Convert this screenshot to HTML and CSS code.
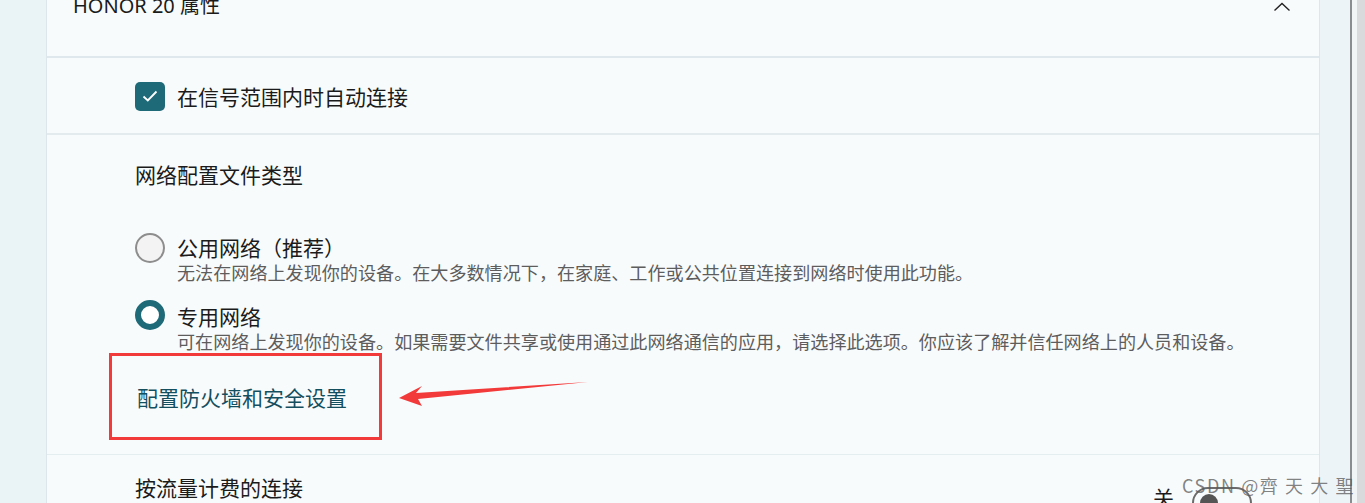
FILE: index.html
```html
<!DOCTYPE html>
<html lang="zh-CN">
<head>
  <meta charset="UTF-8">
  <title>HONOR 20 属性</title>
  <link rel="stylesheet" href="styles.css">
</head>
<body>
  <div class="window">
    <div class="side-left"></div>

    <main class="panel">
      <div class="header">
        <span class="title">HONOR 20 属性</span>
        <svg class="chevron" width="18" height="10" viewBox="0 0 18 10">
          <polyline points="1.5,8.5 9,1.5 16.5,8.5" fill="none" stroke="#222" stroke-width="1.4"/>
        </svg>
      </div>

      <div class="row check-row">
        <span class="checkbox">
          <svg width="16" height="12" viewBox="0 0 16 12">
            <polyline points="1.5,6.5 5.8,10.5 14.5,1.5" fill="none" stroke="#fff" stroke-width="1.8"/>
          </svg>
        </span>
        <span class="label">在信号范围内时自动连接</span>
      </div>

      <section class="row profile">
        <div class="section-title">网络配置文件类型</div>

        <div class="option">
          <span class="radio"></span>
          <div>
            <div class="label">公用网络（推荐）</div>
            <div class="desc">无法在网络上发现你的设备。在大多数情况下，在家庭、工作或公共位置连接到网络时使用此功能。</div>
          </div>
        </div>

        <div class="option second">
          <span class="radio on"></span>
          <div>
            <div class="label">专用网络</div>
            <div class="desc">可在网络上发现你的设备。如果需要文件共享或使用通过此网络通信的应用，请选择此选项。你应该了解并信任网络上的人员和设备。</div>
          </div>
        </div>

        <div class="mark-box">
          <a class="link" href="#">配置防火墙和安全设置</a>
        </div>
      </section>

      <div class="row metered">
        <span class="label">按流量计费的连接</span>
        <div class="switch-wrap">
          <span class="off">关</span>
          <span class="switch"><span class="knob"></span></span>
        </div>
      </div>
    </main>

    <div class="side-right">
      <div class="track"></div>
      <div class="edge"></div>
    </div>
  </div>

  <svg class="arrow" width="200" height="30" viewBox="0 0 200 30">
    <polygon points="190,1 18,12 24,5 1,17 24,25 20,18" fill="#f23a3a"/>
  </svg>

  <div class="watermark">CSDN @齊 天 大 聖</div>
</body>
</html>
```

FILE: styles.css
```css
body {
  margin: 0;
  height: 503px;
  overflow: hidden;
  font-family: "Noto Sans CJK SC", "Noto Sans", sans-serif;
  color: #1b1b1b;
  background: #eaf3f6;
}
.window {
  display: flex;
  height: 503px;
}
.side-left {
  width: 46px;
  background: #eaf3f6;
  border-right: 1px solid #dde7eb;
}
.panel {
  width: 1272px;
  background: #f8fbfc;
  display: flex;
  flex-direction: column;
  overflow: hidden;
}
.panel > * {
  flex-shrink: 0;
}
.header {
  height: 56px;
  border-bottom: 2px solid #dfe8ec;
  display: flex;
  justify-content: space-between;
  align-items: flex-start;
  padding: 0 28px 0 26px;
}
.title {
  font-family: "Noto Sans", "Noto Sans CJK SC", sans-serif;
  font-size: 20px;
  line-height: 28px;
  margin-top: -8px;
}
.chevron {
  margin-top: 2px;
}
.row {
  padding-left: 88px;
}
.check-row {
  height: 75px;
  border-bottom: 2px solid #e3ebef;
  display: flex;
  align-items: center;
  gap: 12px;
}
.checkbox {
  width: 30px;
  height: 29px;
  border-radius: 5px;
  background: #1f6a78;
  display: flex;
  align-items: center;
  justify-content: center;
  margin-top: 1px;
}
.label {
  font-size: 21px;
  line-height: 28px;
}
.profile {
  height: 320px;
  box-sizing: border-box;
  padding-top: 25px;
  border-bottom: 1px solid #e4eef1;
}
.section-title {
  font-size: 21px;
  line-height: 28px;
  margin-bottom: 45px;
}
.option {
  display: flex;
  gap: 12px;
}
.option.second {
  margin-top: 19px;
}
.radio {
  width: 26px;
  height: 26px;
  border: 2px solid #8d8d8d;
  border-radius: 50%;
  background: #f3f3f3;
  flex-shrink: 0;
}
.radio.on {
  width: 18px;
  height: 18px;
  border: 6px solid #1f6a78;
  background: #fff;
  margin-top: -2px;
}
.desc {
  font-size: 18.1px;
  line-height: 22px;
  color: #5d5d5d;
  white-space: nowrap;
}
.mark-box {
  width: 242px;
  height: 54px;
  margin-left: -26px;
  margin-top: 1px;
  padding: 27px 0 0 25px;
  border: 3px solid #f23a3a;
}
.link {
  font-size: 21px;
  line-height: 28px;
  color: #134f5f;
  text-decoration: none;
}
.metered {
  flex: 1 0 auto;
  display: flex;
  justify-content: space-between;
  padding-top: 18px;
  padding-right: 67px;
}
.switch-wrap {
  display: flex;
  align-items: flex-start;
  gap: 18px;
  margin-top: 10px;
}
.off {
  font-size: 21px;
  line-height: 28px;
}
.switch {
  width: 60px;
  height: 32px;
  border: 2px solid #6b6b6b;
  border-radius: 16px;
  box-sizing: border-box;
  margin-top: 4px;
  padding: 5px 6px;
}
.knob {
  display: block;
  width: 18px;
  height: 18px;
  border-radius: 50%;
  background: #555;
}
.side-right {
  flex: 1;
  display: flex;
  background: #ecf4f7;
  border-left: 1px solid #dde7eb;
}
.track {
  width: 30px;
}
.edge {
  flex: 1;
  border-left: 2px solid #8a8d8f;
  background: linear-gradient(to right, #f2f5f6 5px, #d8dadb 5px);
}
.arrow {
  position: absolute;
  left: 398px;
  top: 381px;
}
.watermark {
  position: absolute;
  left: 1182px;
  top: 472px;
  font-size: 18px;
  letter-spacing: 1.6px;
  color: rgba(90, 90, 90, 0.75);
}
```
